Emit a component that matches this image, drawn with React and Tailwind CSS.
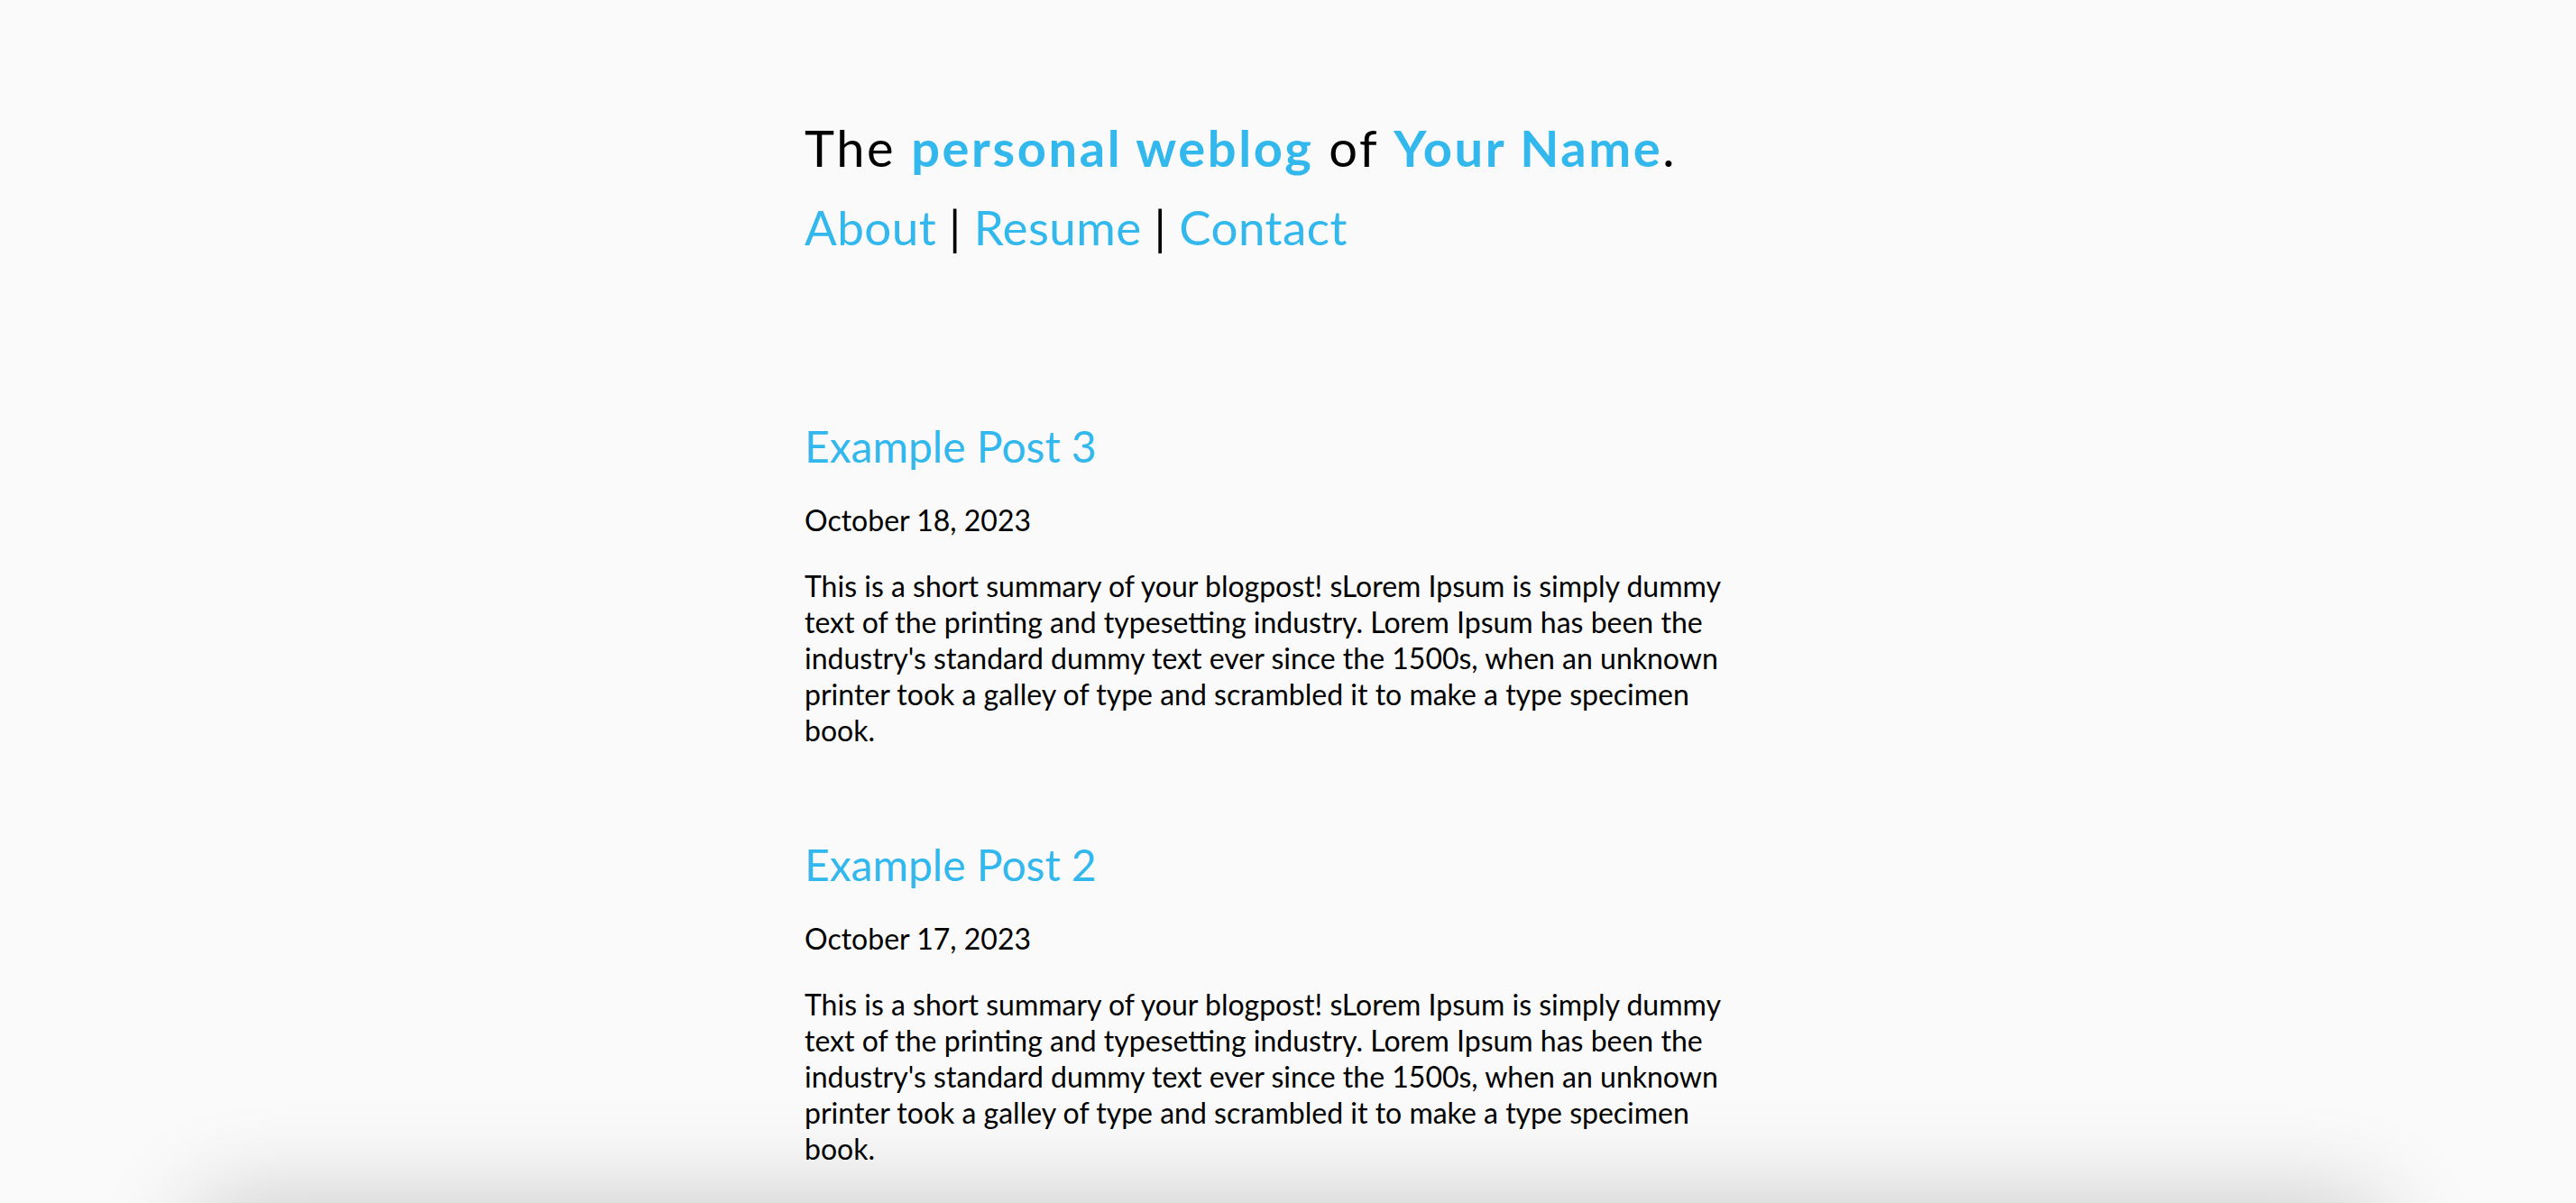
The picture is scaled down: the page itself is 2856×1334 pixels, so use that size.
const posts = [
  {
    id: 3,
    title: "Example Post 3",
    date: "October 18, 2023",
    summary:
      "This is a short summary of your blogpost! sLorem Ipsum is simply dummy text of the printing and typesetting industry. Lorem Ipsum has been the industry's standard dummy text ever since the 1500s, when an unknown printer took a galley of type and scrambled it to make a type specimen book.",
  },
  {
    id: 2,
    title: "Example Post 2",
    date: "October 17, 2023",
    summary:
      "This is a short summary of your blogpost! sLorem Ipsum is simply dummy text of the printing and typesetting industry. Lorem Ipsum has been the industry's standard dummy text ever since the 1500s, when an unknown printer took a galley of type and scrambled it to make a type specimen book.",
  },
];

const App = () => {
  return (
    <div className="min-h-screen bg-[#fafafa] text-black font-['Lato',sans-serif] overflow-hidden">
      <div className="mx-auto w-[1074px] pl-[1px] pt-[132px]">
        <header>
          <h1 className="text-[56px] leading-[64px] font-normal tracking-[2.6px]">
            The{" "}
            <a href="#" className="font-bold text-[#32b8ed]">
              personal weblog
            </a>{" "}
            of{" "}
            <a href="#" className="font-bold text-[#32b8ed]">
              Your Name
            </a>
            .
          </h1>
          <nav className="mt-[24px] text-[53px] leading-[64px] tracking-[0.4px]">
            <a href="#" className="text-[#32b8ed]">
              About
            </a>{" "}
            |{" "}
            <a href="#" className="text-[#32b8ed]">
              Resume
            </a>{" "}
            |{" "}
            <a href="#" className="text-[#32b8ed]">
              Contact
            </a>
          </nav>
        </header>

        <main className="mt-[183px] flex flex-col gap-[101px]">
          {posts.map((post) => (
            <article key={post.id}>
              <h2 className="text-[48px] leading-[56px]">
                <a href="#" className="text-[#32b8ed]">
                  {post.title}
                </a>
              </h2>
              <p className="mt-[34px] text-[32px] leading-[40px]">{post.date}</p>
              <p className="mt-[33px] w-[1040px] text-[32px] leading-[40px]">
                {post.summary}
              </p>
            </article>
          ))}
        </main>
      </div>

      {/* soft shadow along the bottom edge */}
      <div className="pointer-events-none fixed left-[210px] right-[210px] -bottom-[100px] h-[100px] rounded-[60px] shadow-[0_0_110px_rgba(0,0,0,0.22)]" />
    </div>
  );
};

export default App;
